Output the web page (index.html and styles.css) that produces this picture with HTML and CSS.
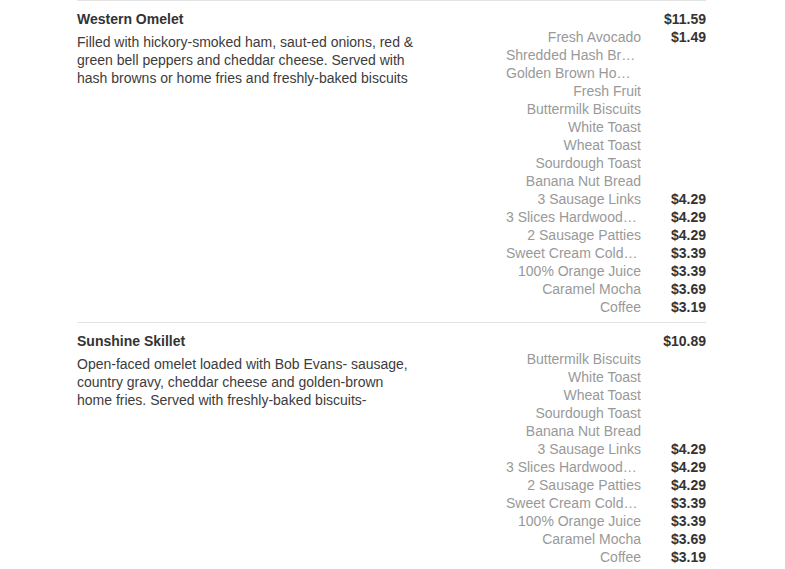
FILE: index.html
```html
<!DOCTYPE html>
<html lang="en">
<head>
<meta charset="utf-8">
<title>Menu</title>
<link rel="stylesheet" href="styles.css">
</head>
<body>
<div class="menu">
  <section class="item">
    <div class="info">
      <h3 class="title">Western Omelet</h3>
      <p class="desc">Filled with hickory-smoked ham, saut-ed onions, red &amp; green bell peppers and cheddar cheese. Served with hash browns or home fries and freshly-baked biscuits</p>
    </div>
    <ul class="options">
      <li class="opt"><span class="name"></span><span class="price">$11.59</span></li>
      <li class="opt"><span class="name">Fresh Avocado</span><span class="price">$1.49</span></li>
      <li class="opt"><span class="name">Shredded Hash Browns</span><span class="price"></span></li>
      <li class="opt"><span class="name">Golden Brown Home Fries</span><span class="price"></span></li>
      <li class="opt"><span class="name">Fresh Fruit</span><span class="price"></span></li>
      <li class="opt"><span class="name">Buttermilk Biscuits</span><span class="price"></span></li>
      <li class="opt"><span class="name">White Toast</span><span class="price"></span></li>
      <li class="opt"><span class="name">Wheat Toast</span><span class="price"></span></li>
      <li class="opt"><span class="name">Sourdough Toast</span><span class="price"></span></li>
      <li class="opt"><span class="name">Banana Nut Bread</span><span class="price"></span></li>
      <li class="opt"><span class="name">3 Sausage Links</span><span class="price">$4.29</span></li>
      <li class="opt"><span class="name">3 Slices Hardwood-Smoked Bacon</span><span class="price">$4.29</span></li>
      <li class="opt"><span class="name">2 Sausage Patties</span><span class="price">$4.29</span></li>
      <li class="opt"><span class="name">Sweet Cream Cold Brew</span><span class="price">$3.39</span></li>
      <li class="opt"><span class="name">100% Orange Juice</span><span class="price">$3.39</span></li>
      <li class="opt"><span class="name">Caramel Mocha</span><span class="price">$3.69</span></li>
      <li class="opt"><span class="name">Coffee</span><span class="price">$3.19</span></li>
    </ul>
  </section>
  <section class="item">
    <div class="info">
      <h3 class="title">Sunshine Skillet</h3>
      <p class="desc">Open-faced omelet loaded with Bob Evans- sausage, country gravy, cheddar cheese and golden-brown home fries. Served with freshly-baked biscuits-</p>
    </div>
    <ul class="options">
      <li class="opt"><span class="name"></span><span class="price">$10.89</span></li>
      <li class="opt"><span class="name">Buttermilk Biscuits</span><span class="price"></span></li>
      <li class="opt"><span class="name">White Toast</span><span class="price"></span></li>
      <li class="opt"><span class="name">Wheat Toast</span><span class="price"></span></li>
      <li class="opt"><span class="name">Sourdough Toast</span><span class="price"></span></li>
      <li class="opt"><span class="name">Banana Nut Bread</span><span class="price"></span></li>
      <li class="opt"><span class="name">3 Sausage Links</span><span class="price">$4.29</span></li>
      <li class="opt"><span class="name">3 Slices Hardwood-Smoked Bacon</span><span class="price">$4.29</span></li>
      <li class="opt"><span class="name">2 Sausage Patties</span><span class="price">$4.29</span></li>
      <li class="opt"><span class="name">Sweet Cream Cold Brew</span><span class="price">$3.39</span></li>
      <li class="opt"><span class="name">100% Orange Juice</span><span class="price">$3.39</span></li>
      <li class="opt"><span class="name">Caramel Mocha</span><span class="price">$3.69</span></li>
      <li class="opt"><span class="name">Coffee</span><span class="price">$3.19</span></li>
    </ul>
  </section>
</div>
</body>
</html>
```
FILE: styles.css
```css
html {
  overflow: hidden;
  background: #fff;
}
body {
  margin: 0;
  font-family: "Liberation Sans", Arial, sans-serif;
  font-size: 14px;
  color: #333;
}
.menu {
  margin-left: 77px;
  width: 629px;
}
.item {
  display: flex;
  justify-content: space-between;
  border-top: 1px solid #e3e3e3;
  padding: 9px 0 6px;
}
.info {
  width: 340px;
}
.title {
  margin: 0;
  font-size: 14px;
  line-height: 18px;
  font-weight: bold;
  color: #333;
}
.desc {
  margin: 5px 0 0;
  line-height: 18px;
  color: #3c3c3c;
}
.options {
  list-style: none;
  margin: 0;
  padding: 0;
}
.opt {
  display: flex;
  line-height: 18px;
  height: 18px;
}
.name {
  width: 135px;
  text-align: right;
  white-space: nowrap;
  overflow: hidden;
  text-overflow: ellipsis;
  color: #999;
}
.price {
  width: 65px;
  text-align: right;
  font-weight: bold;
  color: #333;
}
```
